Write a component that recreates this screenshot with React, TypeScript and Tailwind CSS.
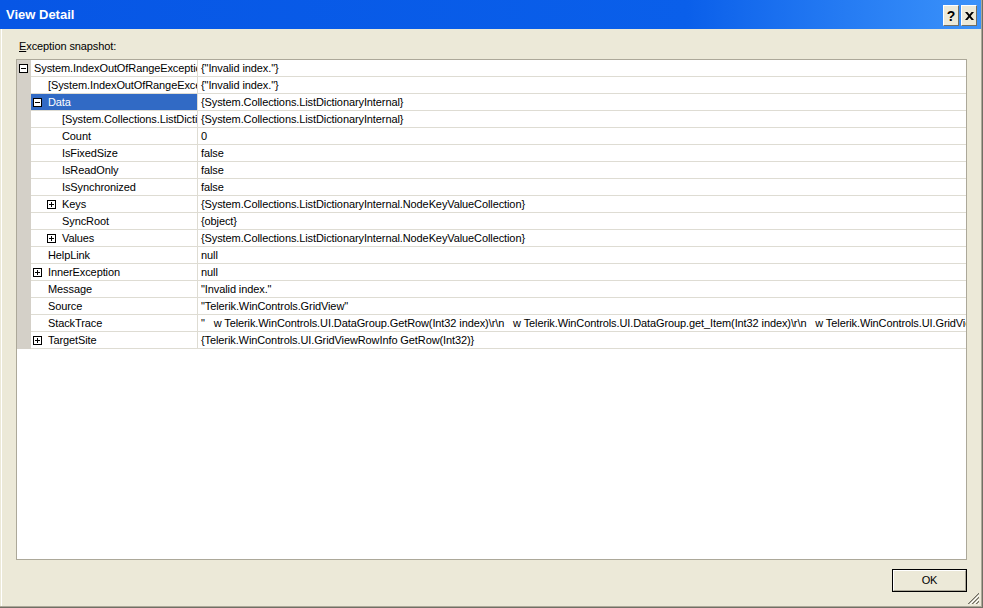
import React from "react";

type Row = {
  level: 0 | 1 | 2;
  exp?: "plus" | "minus";
  name: string;
  value: string;
  selected?: boolean;
};

const rows: Row[] = [
  { level: 0, exp: "minus", name: "System.IndexOutOfRangeException", value: '{"Invalid index."}' },
  { level: 1, name: "[System.IndexOutOfRangeException]", value: '{"Invalid index."}' },
  { level: 1, exp: "minus", name: "Data", value: "{System.Collections.ListDictionaryInternal}", selected: true },
  { level: 2, name: "[System.Collections.ListDictionaryInternal]", value: "{System.Collections.ListDictionaryInternal}" },
  { level: 2, name: "Count", value: "0" },
  { level: 2, name: "IsFixedSize", value: "false" },
  { level: 2, name: "IsReadOnly", value: "false" },
  { level: 2, name: "IsSynchronized", value: "false" },
  { level: 2, exp: "plus", name: "Keys", value: "{System.Collections.ListDictionaryInternal.NodeKeyValueCollection}" },
  { level: 2, name: "SyncRoot", value: "{object}" },
  { level: 2, exp: "plus", name: "Values", value: "{System.Collections.ListDictionaryInternal.NodeKeyValueCollection}" },
  { level: 1, name: "HelpLink", value: "null" },
  { level: 1, exp: "plus", name: "InnerException", value: "null" },
  { level: 1, name: "Message", value: '"Invalid index."' },
  { level: 1, name: "Source", value: '"Telerik.WinControls.GridView"' },
  {
    level: 1,
    name: "StackTrace",
    value:
      '"   w Telerik.WinControls.UI.DataGroup.GetRow(Int32 index)\\r\\n   w Telerik.WinControls.UI.DataGroup.get_Item(Int32 index)\\r\\n   w Telerik.WinControls.UI.GridViewTemplate.get_Rows()',
  },
  { level: 1, exp: "plus", name: "TargetSite", value: "{Telerik.WinControls.UI.GridViewRowInfo GetRow(Int32)}" },
];

function Expander({ kind }: { kind: "plus" | "minus" }) {
  return (
    <svg width="9" height="9" viewBox="0 0 9 9" className="shrink-0" shapeRendering="crispEdges">
      <rect x="0.5" y="0.5" width="8" height="8" fill="#fff" stroke="#000" />
      <line x1="2" y1="4.5" x2="7" y2="4.5" stroke="#000" />
      {kind === "plus" && <line x1="4.5" y1="2" x2="4.5" y2="7" stroke="#000" />}
    </svg>
  );
}

function nameCellPad(r: Row) {
  if (r.level === 0) return "pl-[3px]";
  if (r.level === 1) return r.exp ? "pl-[2px] gap-[6px]" : "pl-[17px]";
  return r.exp ? "pl-[16px] gap-[6px]" : "pl-[31px]";
}

function TreeRow({ r }: { r: Row }) {
  return (
    <div className="flex h-[17px]">
      <div className="flex w-[14px] shrink-0 items-center bg-[#D4D0C8] pl-[2px]">
        {r.level === 0 && r.exp && <Expander kind={r.exp} />}
      </div>
      <div className="flex min-w-0 flex-1 border-b border-[#DEDCD3]">
        <div
          className={`flex w-[167px] shrink-0 items-center overflow-hidden whitespace-nowrap border-r border-[#DEDCD3] ${nameCellPad(r)} ${
            r.selected ? "bg-[#316AC5] text-white" : "text-black"
          }`}
        >
          {r.level > 0 && r.exp && <Expander kind={r.exp} />}
          <span>{r.name}</span>
        </div>
        <div className="flex min-w-0 flex-1 items-center overflow-hidden whitespace-pre pl-[3px] text-black">
          {r.value}
        </div>
      </div>
    </div>
  );
}

function CaptionButton({ children }: { children: React.ReactNode }) {
  return (
    <div className="flex h-[21px] w-[16px] items-center justify-center border border-b-[#716F64] border-l-white border-r-[#716F64] border-t-white bg-[#ECE9D8]">
      {children}
    </div>
  );
}

export default function App() {
  return (
    <div className="h-[608px] w-[983px] overflow-hidden border-b border-r border-[#716F64] font-['Liberation_Sans',Arial,sans-serif] text-[11px] tracking-[-0.1px] text-black">
      <div className="relative flex h-full w-full flex-col border-b border-r border-[#ACA899] bg-[#ECE9D8]">
        <div className="flex h-[29px] shrink-0 items-start justify-between bg-linear-to-r from-[#0756E5] via-[#0A5FEA] via-70% to-[#3B92FA] pl-[6px] pr-[4px]">
          <span className="mt-[7px] text-[13px] font-bold leading-[16px] tracking-normal text-white">View Detail</span>
          <div className="mt-[5px] flex gap-[2px]">
            <CaptionButton>
              <span className="text-[14px] font-bold leading-none">?</span>
            </CaptionButton>
            <CaptionButton>
              <svg width="9" height="8" viewBox="0 0 9 8">
                <path
                  d="M0 0 H2.4 L4.5 2.6 L6.6 0 H9 L5.7 4 L9 8 H6.6 L4.5 5.4 L2.4 8 H0 L3.3 4 Z"
                  fill="#000"
                />
              </svg>
            </CaptionButton>
          </div>
        </div>

        <div className="ml-px flex min-h-0 flex-1 flex-col border-l border-white pb-[14px] pl-[14px] pr-[14px] pt-[11px]">
          <div className="h-[13px] pl-[3px] leading-[13px]">
            <span className="underline">E</span>xception snapshot:
          </div>
          <div className="mt-[6px] min-h-0 flex-1 overflow-hidden border border-[#ACA899] bg-white">
            {rows.map((r, i) => (
              <TreeRow key={i} r={r} />
            ))}
          </div>
          <div className="mt-[9px] flex justify-end">
            <button className="h-[23px] w-[75px] border border-black bg-[#ECE9D8] p-0">
              <span className="flex h-full w-full items-center justify-center border border-b-[#ACA899] border-l-white border-r-[#ACA899] border-t-white">
                OK
              </span>
            </button>
          </div>
        </div>

        <svg
          className="absolute bottom-[1px] right-[1px]"
          width="12"
          height="12"
          viewBox="0 0 12 12"
          shapeRendering="crispEdges"
        >
          <path d="M11 1 L1 11 M11 5 L5 11 M11 9 L9 11" stroke="#ACA899" strokeWidth="1" />
          <path d="M11 2 L2 11 M11 6 L6 11 M11 10 L10 11" stroke="#fff" strokeWidth="1" />
          <path d="M11 0 L0 11 M11 4 L4 11 M11 8 L8 11" stroke="#716F64" strokeWidth="1" />
        </svg>
      </div>
    </div>
  );
}
